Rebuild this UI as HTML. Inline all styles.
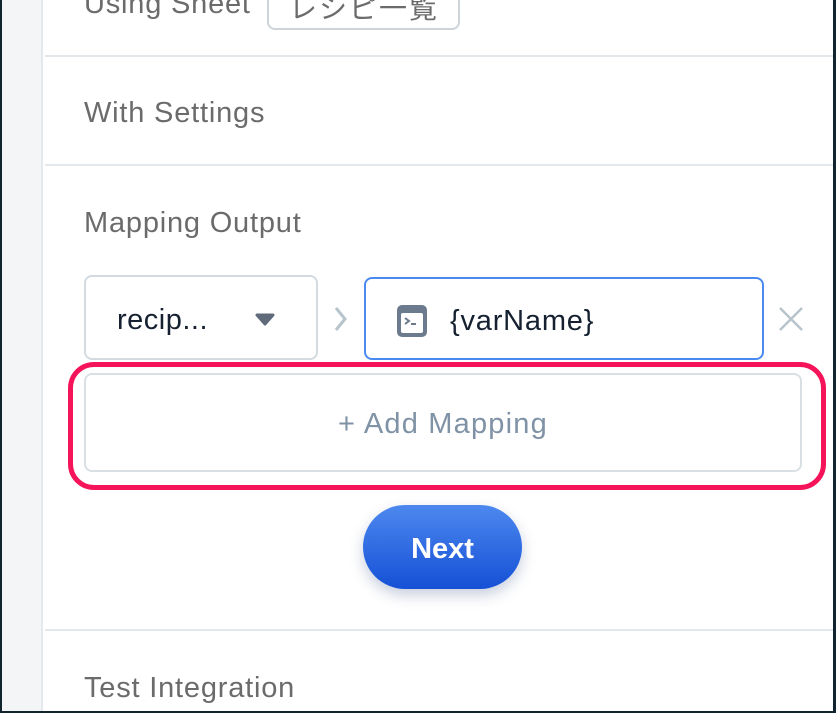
<!DOCTYPE html>
<html><head><meta charset="utf-8"><style>
*{box-sizing:border-box;margin:0;padding:0}
body{width:836px;height:713px;background:#10252e;position:relative;overflow:hidden;font-family:"Liberation Sans","Noto Sans CJK JP",sans-serif}
.in{position:absolute;left:2px;top:0;width:831px;height:711px;background:#fff;overflow:hidden}
.strip{position:absolute;left:0;top:0;width:41px;height:100%;background:#f3f5f7;border-right:2px solid #e3e8ec}
.t{position:absolute;font-size:29px;color:#6b6b6b;letter-spacing:0.8px;white-space:nowrap}
.hr{position:absolute;left:43px;right:0;height:2px;background:#e3e8ec}
.box{position:absolute;background:#fff;border-radius:8px;white-space:nowrap}
</style></head><body><div class="in">
<div class="strip"></div>
<div class="t" style="left:82px;top:-12px">Using Sheet</div>
<div class="box" style="left:265px;top:-10px;width:193px;height:40px;border:2px solid #cfd4d8;font-size:28px;color:#6b6b6b;padding-left:20px;line-height:34px;letter-spacing:2px">レシピ一覧</div>
<div class="hr" style="top:55px"></div>
<div class="t" style="left:82px;top:97px">With Settings</div>
<div class="hr" style="top:164px"></div>
<div class="t" style="left:82px;top:207px">Mapping Output</div>
<div class="box" style="left:82px;top:275px;width:234px;height:85px;border:2px solid #d3dbe0;font-size:29px;color:#152030;padding:27px 0 0 31px;letter-spacing:0.5px">recip...</div>
<svg style="position:absolute;left:253px;top:313px" width="20" height="13"><path d="M2 2H18L10 11Z" fill="#5f6b7a" stroke="#5f6b7a" stroke-linejoin="round" stroke-width="3"/></svg>
<svg style="position:absolute;left:331px;top:306px" width="16" height="26"><path d="M3 2L12 13L3 24" fill="none" stroke="#b8c4cc" stroke-width="3"/></svg>
<div class="box" style="left:362px;top:277px;width:400px;height:83px;border:2px solid #4a8af0"></div>
<svg style="position:absolute;left:394px;top:304px" width="32" height="34"><rect x="1" y="1" width="30" height="32" rx="5" fill="#6b7a8c"/><rect x="5" y="9" width="22" height="20" rx="2" fill="#fff"/><path d="M9 14l4 3-4 3M15 20h5" stroke="#6b7a8c" stroke-width="2" fill="none"/></svg>
<div style="position:absolute;left:448px;top:305px;font-size:29px;color:#152030;letter-spacing:0.8px">{varName}</div>
<svg style="position:absolute;left:776px;top:306px" width="26" height="26"><path d="M2 2L24 24M24 2L2 24" stroke="#b8c4cc" stroke-width="2.5"/></svg>
<div class="box" style="left:66px;top:362px;width:758px;height:128px;border:5px solid #f5145a;border-radius:26px"></div>
<div class="box" style="left:82px;top:373px;width:718px;height:99px;border:2px solid #d8e0e4;text-align:center;font-size:29px;color:#7f92a6;line-height:99px;letter-spacing:1.2px">+ Add Mapping</div>
<div style="position:absolute;left:361px;top:505px;width:159px;height:84px;border-radius:42px;background:linear-gradient(#4d88ef,#1550d6);box-shadow:0 6px 14px rgba(30,60,120,.25);color:#fff;font-size:29px;font-weight:bold;text-align:center;line-height:88px">Next</div>
<div class="hr" style="top:629px"></div>
<div class="t" style="left:82px;top:672px">Test Integration</div>
</div></body></html>
